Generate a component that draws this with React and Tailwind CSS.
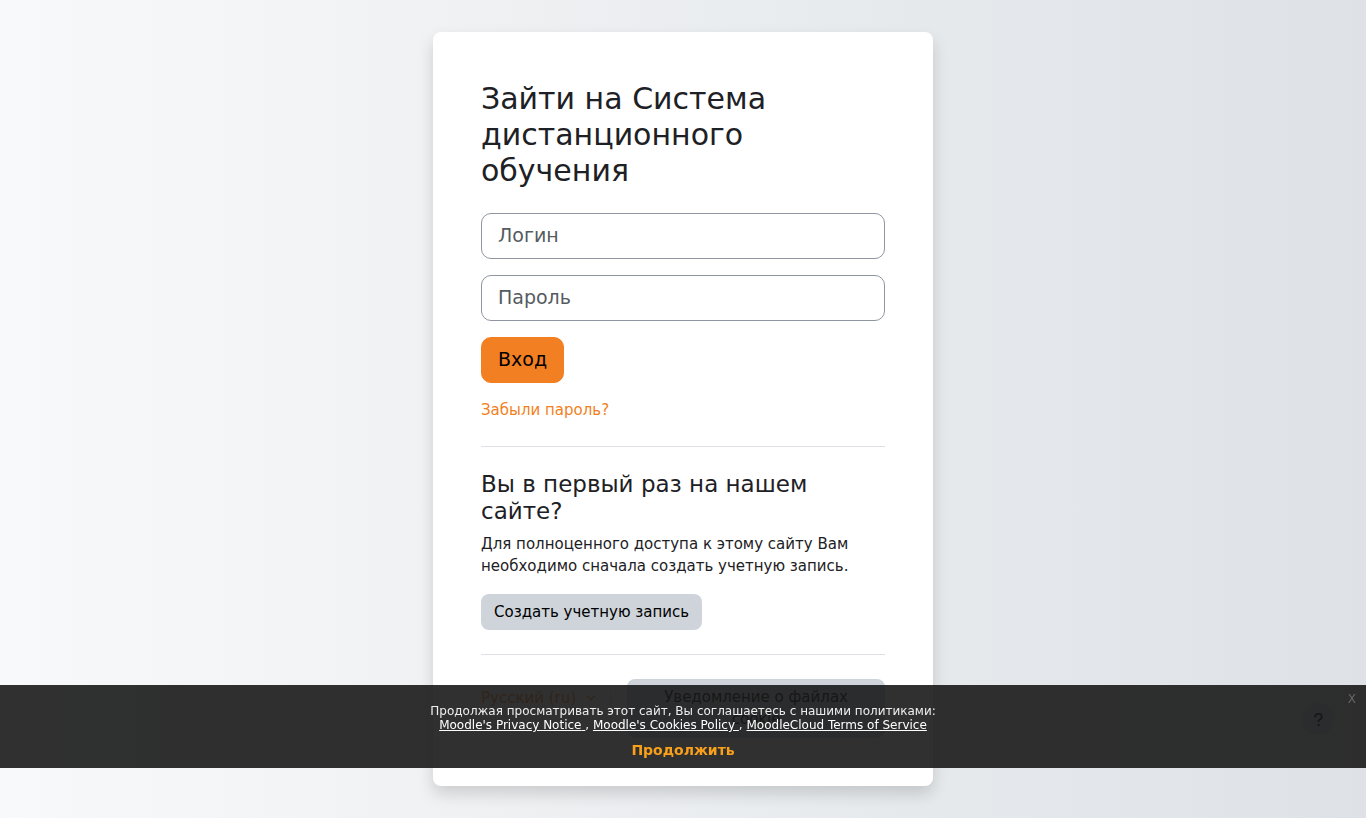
import { ChevronDown } from "lucide-react";
import { FaQuestion } from "react-icons/fa6";

const POLICIES = [
  { label: "Moodle's Privacy Notice", href: "#privacy" },
  { label: "Moodle's Cookies Policy", href: "#cookies" },
  { label: "MoodleCloud Terms of Service", href: "#terms" },
];

const FIELD =
  "block h-[46px] w-full rounded-[10px] border border-[#8f959e] bg-white px-4 pb-0.5 text-[19px] text-[#495057] placeholder:text-[#555b61]";

function LoginForm() {
  return (
    <form className="flex flex-col items-start gap-4" onSubmit={(e) => e.preventDefault()}>
      <input type="text" aria-label="Логин" placeholder="Логин" className={FIELD} />
      <input type="password" aria-label="Пароль" placeholder="Пароль" className={FIELD} />
      <button
        type="submit"
        className="h-[46px] rounded-[10px] border border-[#f27f22] bg-[#f27f22] px-4 pb-0.5 text-[19px] text-black"
      >
        Вход
      </button>
      <a href="#forgot" className="leading-[23px] text-[#f27f22]">
        Забыли пароль?
      </a>
    </form>
  );
}

function Divider() {
  return <hr className="my-6 border-[#dee2e6]" />;
}

function CardFooter() {
  return (
    <div className="flex items-start">
      <button type="button" className="flex h-[38px] shrink-0 items-center gap-2 text-[#f27f22]">
        Русский (ru)
        <ChevronDown size={14} strokeWidth={2} aria-hidden />
      </button>
      <div className="my-3 mr-4 ml-3 w-px shrink-0 self-stretch bg-[#dee2e6]" />
      <button
        type="button"
        className="flex-1 rounded-lg bg-[#ced4da] px-3 pt-[7px] pb-2 text-center text-black"
      >
        Уведомление о файлах cookie
      </button>
    </div>
  );
}

function PolicyBanner() {
  return (
    <div className="fixed inset-x-0 bottom-[50px] flex flex-col items-center bg-[rgba(25,25,25,0.9)] pt-[19px] pb-2 text-center text-xs leading-[14px] text-[#eee]">
      <p>Продолжая просматривать этот сайт, Вы соглашаетесь с нашими политиками:</p>
      <p>
        {POLICIES.map((policy, i) => (
          <span key={policy.href}>
            {i > 0 && ", "}
            <a href={policy.href} className="whitespace-pre-wrap text-white underline">
              {policy.label}
              {i < POLICIES.length - 1 && " "}
            </a>
          </span>
        ))}
      </p>
      <a href="#continue" className="mt-2 text-sm leading-5 font-bold text-[#f9a01b]">
        Продолжить
      </a>
      <button
        type="button"
        aria-label="Закрыть"
        className="absolute top-1.5 right-2.5 text-xs leading-4 text-[#666]"
      >
        X
      </button>
    </div>
  );
}

export default function App() {
  return (
    <div className="min-h-screen bg-linear-to-r from-[#f8f9fa] to-[#dee2e6] px-4 py-8 font-['DejaVu_Sans',sans-serif] text-[15px] leading-[22px] text-[#1d2125]">
      <main className="mx-auto max-w-[500px] rounded-lg bg-white px-12 pt-[49px] pb-12 shadow-[0_8px_16px_rgba(0,0,0,0.15)]">
        <h1 className="mb-6 text-[30px] leading-9">
          Зайти на Система дистанционного обучения
        </h1>
        <LoginForm />
        <Divider />
        <h2 className="mb-2 text-[23px] leading-[27px]">Вы в первый раз на нашем сайте?</h2>
        <p className="mb-[17px]">
          Для полноценного доступа к этому сайту Вам необходимо сначала создать учетную запись.
        </p>
        <button type="button" className="h-9 rounded-lg bg-[#ced4da] px-[13px] text-black">
          Создать учетную запись
        </button>
        <Divider />
        <CardFooter />
      </main>
      <button
        type="button"
        aria-label="Справка"
        className="fixed right-8 bottom-[83px] flex h-8 w-8 items-center justify-center rounded-full bg-[#ced4da] text-black"
      >
        <FaQuestion size={15} aria-hidden />
      </button>
      <PolicyBanner />
    </div>
  );
}
